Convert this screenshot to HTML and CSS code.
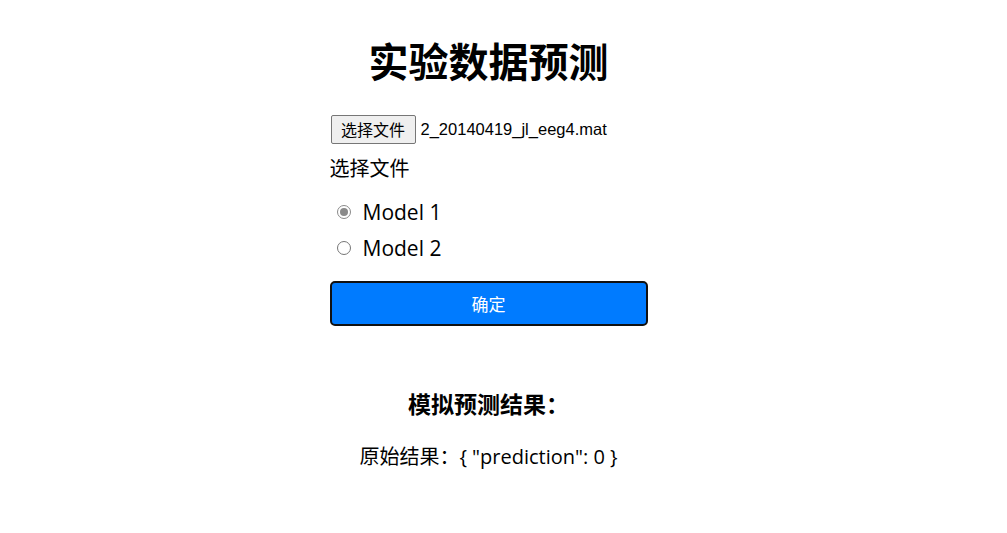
FILE: index.html
```html
<!DOCTYPE html>
<html lang="zh">
<head>
<meta charset="utf-8">
<title>实验数据预测</title>
<link rel="stylesheet" href="styles.css">
</head>
<body>
<div class="page">
  <h1 class="title">实验数据预测</h1>
  <form class="form">
    <div class="file-row">
      <span class="file-btn">选择文件</span>
      <span class="file-name">2_20140419_jl_eeg4.mat</span>
    </div>
    <div class="label">选择文件</div>
    <div class="radios">
      <label class="radio"><span class="dot checked"></span><span>Model 1</span></label>
      <label class="radio"><span class="dot"></span><span>Model 2</span></label>
    </div>
    <button type="button" class="submit">确定</button>
  </form>
  <h3 class="result-title">模拟预测结果：</h3>
  <p class="result">原始结果：{ "prediction": 0 }</p>
</div>
</body>
</html>
```
FILE: styles.css
```css
html, body {
  margin: 0;
  padding: 0;
  background: #fff;
}
body {
  font-family: "Noto Sans CJK SC", "Liberation Sans", sans-serif;
  color: #000;
}
.page {
  display: flex;
  flex-direction: column;
  align-items: center;
  padding-top: 33px;
  padding-right: 30px;
}
.title {
  margin: 0;
  font-size: 40px;
  line-height: 54px;
  font-weight: 700;
}
.form {
  width: 318px;
  margin-top: 27px;
  display: flex;
  flex-direction: column;
}
.file-row {
  display: flex;
  align-items: center;
  height: 30px;
}
.file-btn {
  box-sizing: border-box;
  width: 85px;
  height: 29px;
  border: 1px solid #767676;
  border-radius: 2px;
  background: #efefef;
  font-size: 16px;
  display: flex;
  align-items: center;
  justify-content: center;
  margin-left: 1px;
}
.file-name {
  font-family: "Liberation Sans", sans-serif;
  font-size: 16.5px;
  margin-left: 5px;
}
.label {
  margin-top: 12px;
  font-size: 20px;
  line-height: 24px;
}
.radios {
  margin-top: 19px;
  display: flex;
  flex-direction: column;
  gap: 10px;
}
.radio {
  display: flex;
  align-items: center;
  height: 26px;
  font-family: "Open Sans", "Liberation Sans", sans-serif;
  font-size: 21px;
}
.dot {
  box-sizing: border-box;
  width: 14px;
  height: 14px;
  border: 1px solid #767676;
  border-radius: 50%;
  margin: 0 12px 0 7px;
  position: relative;
}
.dot.checked {
  border-color: #8a8a8a;
}
.dot.checked::after {
  content: "";
  position: absolute;
  left: 2px;
  top: 2px;
  width: 8px;
  height: 8px;
  border-radius: 50%;
  background: #8a8a8a;
}
.submit {
  margin-top: 20px;
  height: 45px;
  width: 318px;
  box-sizing: border-box;
  border: 2px solid #111;
  border-radius: 5px;
  background: #007bff;
  color: #fff;
  font-family: "Noto Sans CJK SC", sans-serif;
  font-size: 17px;
}
.result-title {
  margin: 62px 0 0 0;
  font-size: 23px;
  line-height: 30px;
  font-weight: 700;
}
.result {
  margin: 26px 0 0 0;
  font-family: "Open Sans", "Noto Sans CJK SC", sans-serif;
  font-size: 20px;
  line-height: 26px;
}
```
